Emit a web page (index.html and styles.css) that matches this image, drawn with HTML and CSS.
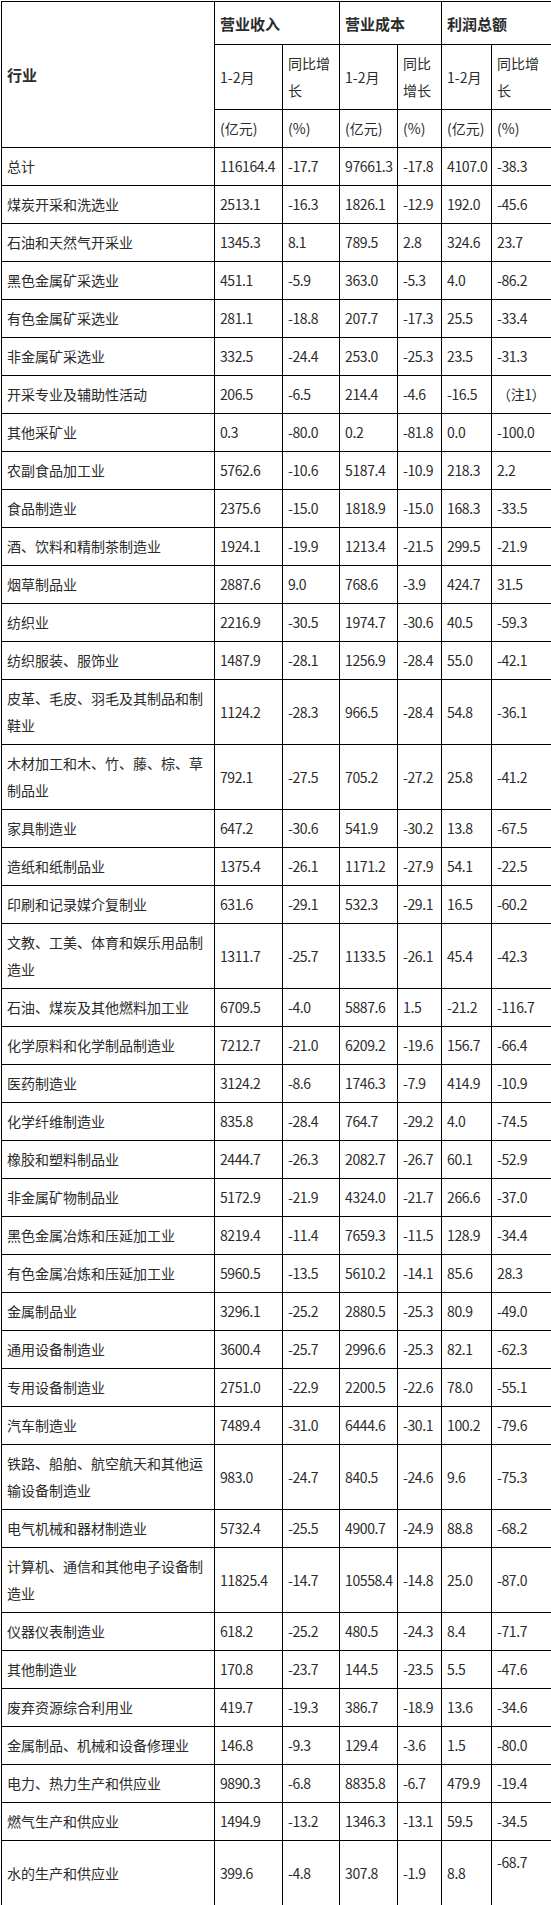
FILE: index.html
```html
<!DOCTYPE html>
<html lang="zh-CN">
<head>
<meta charset="utf-8">
<title>规模以上工业企业主要财务指标</title>
<link rel="stylesheet" href="styles.css">
</head>
<body>
<table class="data">
<colgroup>
<col class="c-name"><col class="c-a"><col class="c-b"><col class="c-c"><col class="c-d"><col class="c-e"><col class="c-f">
</colgroup>
<thead>
<tr class="h1">
<th rowspan="3" class="hd">行业</th>
<th colspan="2" class="hd">营业收入</th>
<th colspan="2" class="hd">营业成本</th>
<th colspan="2" class="hd">利润总额</th>
</tr>
<tr>
<th>1-2月</th><th>同比增长</th><th>1-2月</th><th>同比增长</th><th>1-2月</th><th>同比增长</th>
</tr>
<tr>
<th class="nw">(亿元)</th><th class="nw">(%)</th><th class="nw">(亿元)</th><th class="nw">(%)</th><th class="nw">(亿元)</th><th class="nw">(%)</th>
</tr>
</thead>
<tbody>
<tr><td>总计</td><td>116164.4</td><td>-17.7</td><td>97661.3</td><td>-17.8</td><td>4107.0</td><td>-38.3</td></tr>
<tr><td>煤炭开采和洗选业</td><td>2513.1</td><td>-16.3</td><td>1826.1</td><td>-12.9</td><td>192.0</td><td>-45.6</td></tr>
<tr><td>石油和天然气开采业</td><td>1345.3</td><td>8.1</td><td>789.5</td><td>2.8</td><td>324.6</td><td>23.7</td></tr>
<tr><td>黑色金属矿采选业</td><td>451.1</td><td>-5.9</td><td>363.0</td><td>-5.3</td><td>4.0</td><td>-86.2</td></tr>
<tr><td>有色金属矿采选业</td><td>281.1</td><td>-18.8</td><td>207.7</td><td>-17.3</td><td>25.5</td><td>-33.4</td></tr>
<tr><td>非金属矿采选业</td><td>332.5</td><td>-24.4</td><td>253.0</td><td>-25.3</td><td>23.5</td><td>-31.3</td></tr>
<tr><td>开采专业及辅助性活动</td><td>206.5</td><td>-6.5</td><td>214.4</td><td>-4.6</td><td>-16.5</td><td>（注1）</td></tr>
<tr><td>其他采矿业</td><td>0.3</td><td>-80.0</td><td>0.2</td><td>-81.8</td><td>0.0</td><td>-100.0</td></tr>
<tr><td>农副食品加工业</td><td>5762.6</td><td>-10.6</td><td>5187.4</td><td>-10.9</td><td>218.3</td><td>2.2</td></tr>
<tr><td>食品制造业</td><td>2375.6</td><td>-15.0</td><td>1818.9</td><td>-15.0</td><td>168.3</td><td>-33.5</td></tr>
<tr><td>酒、饮料和精制茶制造业</td><td>1924.1</td><td>-19.9</td><td>1213.4</td><td>-21.5</td><td>299.5</td><td>-21.9</td></tr>
<tr><td>烟草制品业</td><td>2887.6</td><td>9.0</td><td>768.6</td><td>-3.9</td><td>424.7</td><td>31.5</td></tr>
<tr><td>纺织业</td><td>2216.9</td><td>-30.5</td><td>1974.7</td><td>-30.6</td><td>40.5</td><td>-59.3</td></tr>
<tr><td>纺织服装、服饰业</td><td>1487.9</td><td>-28.1</td><td>1256.9</td><td>-28.4</td><td>55.0</td><td>-42.1</td></tr>
<tr><td>皮革、毛皮、羽毛及其制品和制鞋业</td><td>1124.2</td><td>-28.3</td><td>966.5</td><td>-28.4</td><td>54.8</td><td>-36.1</td></tr>
<tr><td>木材加工和木、竹、藤、棕、草制品业</td><td>792.1</td><td>-27.5</td><td>705.2</td><td>-27.2</td><td>25.8</td><td>-41.2</td></tr>
<tr><td>家具制造业</td><td>647.2</td><td>-30.6</td><td>541.9</td><td>-30.2</td><td>13.8</td><td>-67.5</td></tr>
<tr><td>造纸和纸制品业</td><td>1375.4</td><td>-26.1</td><td>1171.2</td><td>-27.9</td><td>54.1</td><td>-22.5</td></tr>
<tr><td>印刷和记录媒介复制业</td><td>631.6</td><td>-29.1</td><td>532.3</td><td>-29.1</td><td>16.5</td><td>-60.2</td></tr>
<tr><td>文教、工美、体育和娱乐用品制造业</td><td>1311.7</td><td>-25.7</td><td>1133.5</td><td>-26.1</td><td>45.4</td><td>-42.3</td></tr>
<tr><td>石油、煤炭及其他燃料加工业</td><td>6709.5</td><td>-4.0</td><td>5887.6</td><td>1.5</td><td>-21.2</td><td>-116.7</td></tr>
<tr><td>化学原料和化学制品制造业</td><td>7212.7</td><td>-21.0</td><td>6209.2</td><td>-19.6</td><td>156.7</td><td>-66.4</td></tr>
<tr><td>医药制造业</td><td>3124.2</td><td>-8.6</td><td>1746.3</td><td>-7.9</td><td>414.9</td><td>-10.9</td></tr>
<tr><td>化学纤维制造业</td><td>835.8</td><td>-28.4</td><td>764.7</td><td>-29.2</td><td>4.0</td><td>-74.5</td></tr>
<tr><td>橡胶和塑料制品业</td><td>2444.7</td><td>-26.3</td><td>2082.7</td><td>-26.7</td><td>60.1</td><td>-52.9</td></tr>
<tr><td>非金属矿物制品业</td><td>5172.9</td><td>-21.9</td><td>4324.0</td><td>-21.7</td><td>266.6</td><td>-37.0</td></tr>
<tr><td>黑色金属冶炼和压延加工业</td><td>8219.4</td><td>-11.4</td><td>7659.3</td><td>-11.5</td><td>128.9</td><td>-34.4</td></tr>
<tr><td>有色金属冶炼和压延加工业</td><td>5960.5</td><td>-13.5</td><td>5610.2</td><td>-14.1</td><td>85.6</td><td>28.3</td></tr>
<tr><td>金属制品业</td><td>3296.1</td><td>-25.2</td><td>2880.5</td><td>-25.3</td><td>80.9</td><td>-49.0</td></tr>
<tr><td>通用设备制造业</td><td>3600.4</td><td>-25.7</td><td>2996.6</td><td>-25.3</td><td>82.1</td><td>-62.3</td></tr>
<tr><td>专用设备制造业</td><td>2751.0</td><td>-22.9</td><td>2200.5</td><td>-22.6</td><td>78.0</td><td>-55.1</td></tr>
<tr><td>汽车制造业</td><td>7489.4</td><td>-31.0</td><td>6444.6</td><td>-30.1</td><td>100.2</td><td>-79.6</td></tr>
<tr><td>铁路、船舶、航空航天和其他运输设备制造业</td><td>983.0</td><td>-24.7</td><td>840.5</td><td>-24.6</td><td>9.6</td><td>-75.3</td></tr>
<tr><td>电气机械和器材制造业</td><td>5732.4</td><td>-25.5</td><td>4900.7</td><td>-24.9</td><td>88.8</td><td>-68.2</td></tr>
<tr><td>计算机、通信和其他电子设备制造业</td><td>11825.4</td><td>-14.7</td><td>10558.4</td><td>-14.8</td><td>25.0</td><td>-87.0</td></tr>
<tr><td>仪器仪表制造业</td><td>618.2</td><td>-25.2</td><td>480.5</td><td>-24.3</td><td>8.4</td><td>-71.7</td></tr>
<tr><td>其他制造业</td><td>170.8</td><td>-23.7</td><td>144.5</td><td>-23.5</td><td>5.5</td><td>-47.6</td></tr>
<tr><td>废弃资源综合利用业</td><td>419.7</td><td>-19.3</td><td>386.7</td><td>-18.9</td><td>13.6</td><td>-34.6</td></tr>
<tr><td>金属制品、机械和设备修理业</td><td>146.8</td><td>-9.3</td><td>129.4</td><td>-3.6</td><td>1.5</td><td>-80.0</td></tr>
<tr><td>电力、热力生产和供应业</td><td>9890.3</td><td>-6.8</td><td>8835.8</td><td>-6.7</td><td>479.9</td><td>-19.4</td></tr>
<tr><td>燃气生产和供应业</td><td>1494.9</td><td>-13.2</td><td>1346.3</td><td>-13.1</td><td>59.5</td><td>-34.5</td></tr>
<tr class="last"><td>水的生产和供应业</td><td>399.6</td><td>-4.8</td><td>307.8</td><td>-1.9</td><td>8.8</td><td class="top">-68.7</td></tr>
</tbody>
</table>
</body>
</html>
```
FILE: styles.css
```css
html, body {
  margin: 0;
  padding: 0;
  background: #fff;
}

body {
  padding: 1px 0 0 1px;
  font-family: "Noto Sans CJK SC", "Noto Sans", sans-serif;
  color: #2b2b2b;
}

.data {
  border-collapse: collapse;
  table-layout: fixed;
  width: 550px;
  font-size: 14px;
  line-height: 27px;
}

.c-name { width: 213px; }
.c-a { width: 68px; }
.c-b { width: 57px; }
.c-c { width: 58px; }
.c-d { width: 44px; }
.c-e { width: 50px; }
.c-f { width: 60px; }

.data th,
.data td {
  border: 1px solid #000;
  padding: 5px 5px;
  text-align: left;
  vertical-align: middle;
  font-weight: normal;
}

.data td + td,
.data .nw {
  white-space: nowrap;
}

.data td + td {
  letter-spacing: -0.4px;
}

.data th.hd {
  font-weight: bold;
  font-size: 15px;
}

.data tr.h1 th {
  height: 32px;
}

.data tr.last td {
  height: 52px;
}

.data tr.last td.top {
  vertical-align: top;
  padding-top: 8px;
}
```
